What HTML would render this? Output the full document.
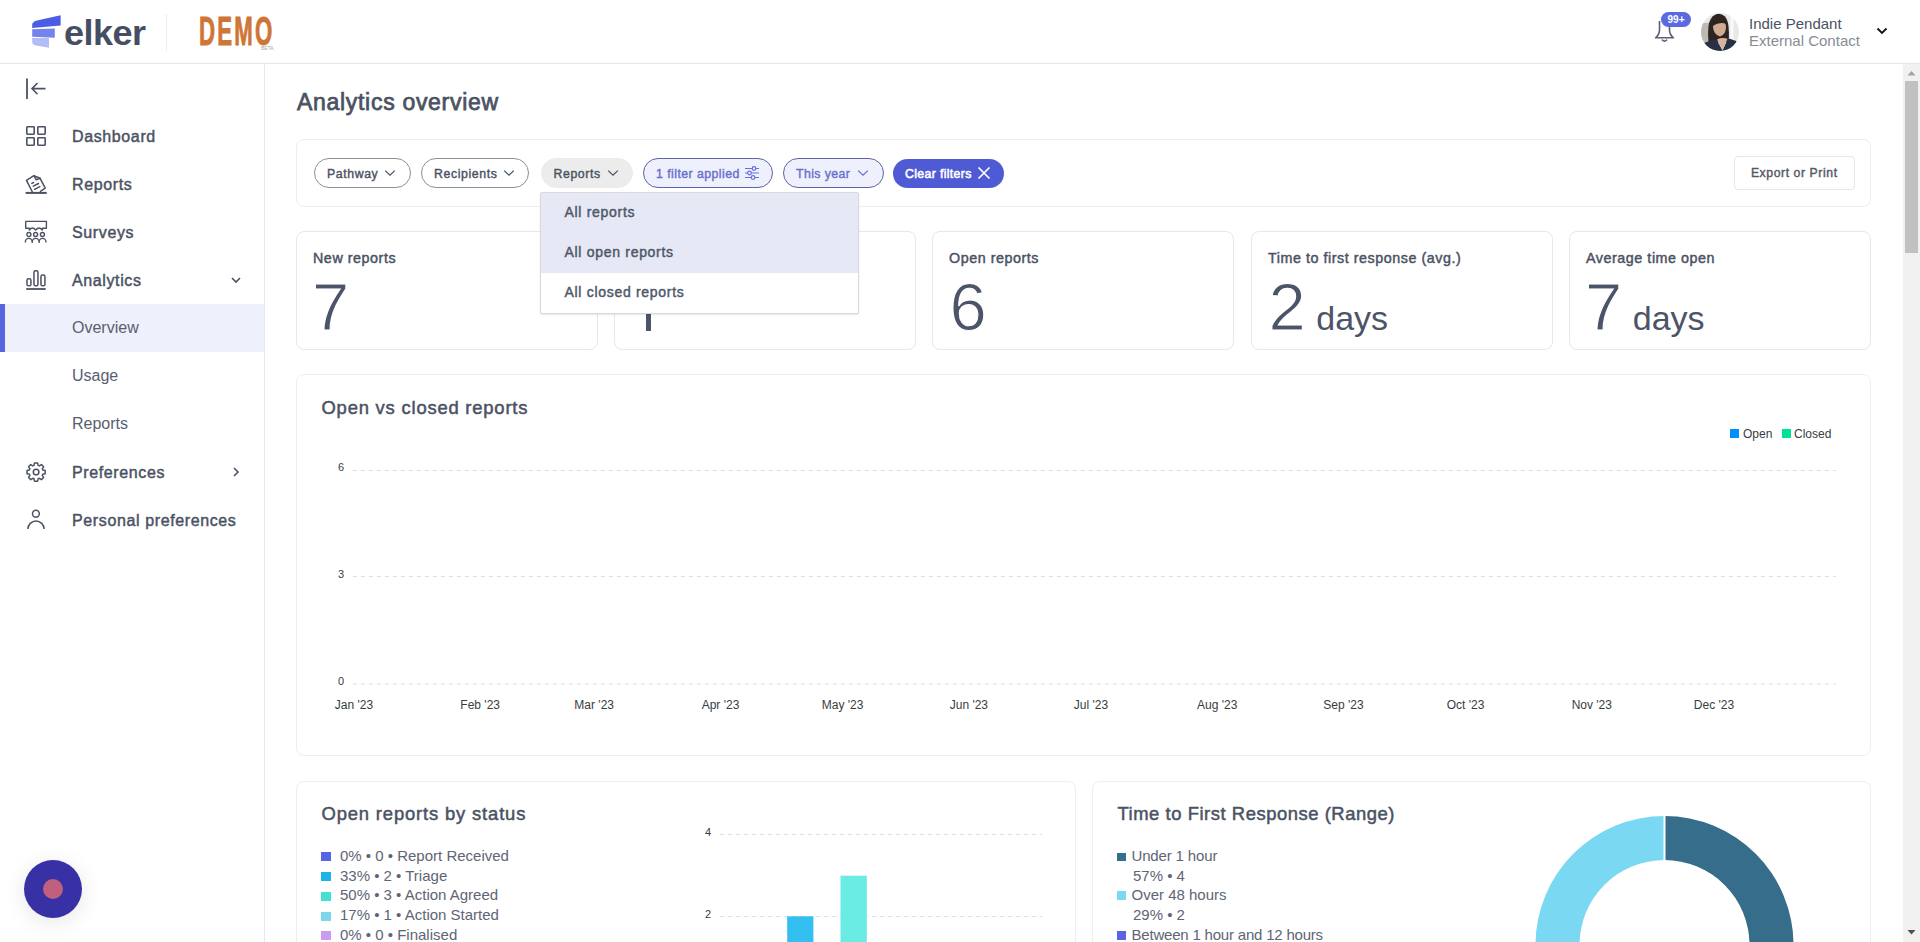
<!DOCTYPE html>
<html><head><meta charset="utf-8">
<style>
*{box-sizing:border-box;margin:0;padding:0}
html,body{width:1920px;height:942px;overflow:hidden;background:#fff;font-family:"Liberation Sans",sans-serif;color:#4a5263}
.a{position:absolute;white-space:nowrap}
#hdr{position:absolute;left:0;top:0;width:1920px;height:64px;border-bottom:1px solid #e6e7ea;background:#fff}
#side{position:absolute;left:0;top:64px;width:265px;height:878px;border-right:1px solid #e8e9ec;background:#fff}
.nav{position:absolute;left:72px;font-size:16px;font-weight:400;-webkit-text-stroke:0.45px #4a5263;letter-spacing:0.62px;line-height:50px;height:48px;color:#4a5263}
.sub{position:absolute;left:72px;font-size:16px;font-weight:400;line-height:48px;height:48px;color:#586070}
.ico{position:absolute;left:26px;width:20px;height:20px}
.card{position:absolute;background:#fff;border:1px solid #e7e8eb;border-radius:8px}
.pill{position:absolute;top:158px;height:30px;border-radius:15px;border:1px solid #8d9098;font-size:12.3px;font-weight:400;-webkit-text-stroke:0.4px currentColor;letter-spacing:0.6px;line-height:30px;color:#4a5263;padding-left:12px}
.pill svg{position:absolute;top:10px}
.stitle{position:absolute;font-size:14.3px;font-weight:400;-webkit-text-stroke:0.45px #4a5263;letter-spacing:0.55px;color:#4a5263;line-height:20px}
.big{position:absolute;font-size:67px;font-weight:400;color:#4b5468;line-height:70px;-webkit-text-stroke:1.1px #fff}
.days{font-size:34px;-webkit-text-stroke:0;color:#4b5468;margin-left:10.5px}
.ctitle{position:absolute;font-size:18.4px;font-weight:400;-webkit-text-stroke:0.5px #4a5263;letter-spacing:0.7px;color:#4a5263;line-height:24px}
.ax{position:absolute;font-size:12px;color:#373d3f;line-height:14px}
.leg{position:absolute;font-size:15px;color:#5e6573;line-height:18px}
.sq{position:absolute;width:10px;height:9px}
</style></head><body>

<!-- HEADER -->
<div id="hdr">
  <svg class="a" style="left:0;top:0" width="300" height="64">
    <path d="M32.2 24 Q33 21.5 37 20.5 L60.6 15.2 L60.6 25.5 L32.2 28.1 Z" fill="#4b5ce6"/>
    <path d="M32.2 29.2 L54.8 28.4 L54.8 37.8 L32.2 36.8 Z" fill="#7584ea"/>
    <path d="M32.2 37.9 L49 38 L49 47.8 L36 45.4 Q32.2 44.6 32.2 42 Z" fill="#b4bcf5"/>
    <line x1="166.5" y1="14" x2="166.5" y2="51" stroke="#ececee" stroke-width="1"/>
  </svg>
  <div class="a" style="left:64px;top:11px;font-size:36px;font-weight:700;color:#464e63;letter-spacing:-0.5px;line-height:44px;transform-origin:0 34px;transform:scaleY(0.95)">elker</div>
  <div class="a" style="left:198.5px;top:12px;font-size:40.5px;font-weight:700;color:#cf7535;line-height:40px;letter-spacing:4px;-webkit-text-stroke:0.9px #cf7535;transform-origin:0 0;transform:scale(0.55,0.985)">DEMO</div>
  <div class="a" style="left:261px;top:45px;font-size:5px;color:#aaa;line-height:6px">BETA</div>

  <!-- bell -->
  <svg class="a" style="left:1650px;top:15px" width="30" height="30" viewBox="0 0 30 30">
    <path d="M9.5 6 L9.5 15 Q9.5 19.5 5.6 22.8 L23.4 22.8 Q19.5 19.5 19.5 15 L19.5 6" fill="none" stroke="#5a6070" stroke-width="1.6" stroke-linejoin="round"/>
    <path d="M12.3 25 Q14.5 27.3 16.7 25" fill="none" stroke="#5a6070" stroke-width="1.6" stroke-linecap="round"/>
  </svg>
<div class="a" style="left:1661px;top:12px;width:30px;height:15px;border-radius:8px;background:#5b6ae0;color:#fff;font-size:10px;font-weight:700;line-height:15px;text-align:center">99+</div>
  <!-- avatar -->
  <svg class="a" style="left:1701px;top:13px" width="38" height="38" viewBox="0 0 38 38">
    <defs><clipPath id="av"><circle cx="19" cy="19" r="19"/></clipPath></defs>
    <g clip-path="url(#av)">
      <rect width="38" height="38" fill="#e9e8e6"/>
      <rect x="0" y="10" width="9" height="22" fill="#bdbab5"/>
      <rect x="29.5" y="3" width="3" height="30" fill="#fafafa"/>
      <path d="M7.5 29 Q6.5 18 8 10 Q11 1 17.5 0.8 Q25 1 27 10 Q28.5 18 27.6 29 Z" fill="#2e2420"/>
      <path d="M12 14 Q12 8 18.5 7.5 Q25 8 25 14 Q25 21.5 19 23.5 Q12.5 21.5 12 14 Z" fill="#d2ab93"/>
      <path d="M11.5 13 Q11.5 4.5 18.5 4 Q25 4.5 25.3 11 Q19 8.5 11.5 13 Z" fill="#2e2420"/>
      <path d="M0 38 L2 31 Q6 28 15.5 26.5 L21.5 37.5 L27 25.5 Q34 27 37 29 L38 38 Z" fill="#273044"/>
      <path d="M16 26.5 L21.6 37.3 L26.5 25.8 Q21 24 16 26.5 Z" fill="#d6b4a0"/>
    </g>
  </svg>
<div class="a" style="left:1749px;top:14px;font-size:15px;color:#4a5263;line-height:20px">Indie Pendant</div>
  <div class="a" style="left:1749px;top:31px;font-size:15px;color:#878c96;line-height:20px">External Contact</div>
  <svg class="a" style="left:1874px;top:24px" width="16" height="14" viewBox="0 0 16 14">
    <path d="M3.5 4.5 L8 9 L12.5 4.5" fill="none" stroke="#111" stroke-width="1.8"/>
  </svg>
</div>

<!-- SIDEBAR -->
<div id="side"></div>

<!-- collapse icon -->
<svg class="a" style="left:20px;top:74px" width="32" height="30" viewBox="0 0 32 30">
  <line x1="7" y1="4.5" x2="7" y2="25" stroke="#4a5263" stroke-width="1.8"/>
  <path d="M25.5 14.6 L12 14.6 M17.5 9 L12 14.6 L17.5 20.2" fill="none" stroke="#4a5263" stroke-width="1.6"/>
</svg>
<!-- dashboard -->
<svg class="ico" style="top:126px" viewBox="0 0 20 20"><g fill="none" stroke="#4a5263" stroke-width="1.6">
  <rect x="0.8" y="0.8" width="7.4" height="7.4" rx="0.6"/><rect x="11.8" y="0.8" width="7.4" height="7.4" rx="0.6"/>
  <rect x="0.8" y="11.8" width="7.4" height="7.4" rx="0.6"/><rect x="11.8" y="11.8" width="7.4" height="7.4" rx="0.6"/></g></svg>
<div class="nav" style="top:112px">Dashboard</div>
<!-- reports -->
<svg class="ico" style="top:174px;overflow:visible" viewBox="0 0 20 20"><g fill="none" stroke="#4a5263" stroke-width="1.5" stroke-linejoin="round" stroke-linecap="round">
  <path d="M6.4 18 L0.5 6.4 L7.9 1.7 L14.1 4.3 L19.2 14.1 L14.4 17.4"/>
  <path d="M7.9 1.7 L10.3 5.8 L14.1 4.3"/>
  <path d="M5.8 9.4 L7.6 8.5 M7.3 12.2 L12.5 9.5 M8.5 15.3 L13.8 12.6"/></g>
  <path d="M-0.4 18.9 L20.7 18.9" stroke="#4a5263" stroke-width="2"/></svg>
<div class="nav" style="top:160px">Reports</div>
<!-- surveys -->
<svg class="ico" style="top:221px;height:22px;overflow:visible" viewBox="0 0 20 22"><g fill="none" stroke="#4a5263" stroke-width="1.4" stroke-linejoin="round">
  <path d="M3.3 9 L3.3 7.2 L-0.3 7.2 L-0.3 0.4 L20.4 0.4 L20.4 7.2 L16.4 7.2 L16.4 9 Q13 5 9.7 9 Q6.5 5 3.3 9 Z"/>
  <circle cx="2.9" cy="13.5" r="2"/><circle cx="9.6" cy="13.5" r="2"/><circle cx="16.4" cy="13.5" r="2"/>
  <path d="M-0.7 21.4 A3.45 4 0 0 1 6.2 21.4 A3.45 4 0 0 1 13.1 21.4 A3.45 4 0 0 1 20 21.4"/></g></svg>
<div class="nav" style="top:208px">Surveys</div>
<!-- analytics -->
<svg class="ico" style="top:270px" viewBox="0 0 20 20"><g fill="none" stroke="#4a5263" stroke-width="1.5">
  <rect x="0.95" y="8.85" width="4" height="7" rx="1.6"/><rect x="7.95" y="0.75" width="4" height="15.1" rx="1.6"/><rect x="14.95" y="5.05" width="4" height="10.8" rx="1.6"/>
  <path d="M0.2 19 L19.7 19" stroke-width="1.8"/></g></svg>
<div class="nav" style="top:256px">Analytics</div>
<svg class="a" style="left:229px;top:273px" width="14" height="14" viewBox="0 0 14 14"><path d="M3 5 L7 9 L11 5" fill="none" stroke="#4a5263" stroke-width="1.6"/></svg>
<!-- overview highlight -->
<div class="a" style="left:0;top:304px;width:264px;height:48px;background:#eef0fb"></div>
<div class="a" style="left:0;top:304px;width:5px;height:48px;background:#5865e0"></div>
<div class="sub" style="top:304px">Overview</div>
<div class="sub" style="top:352px">Usage</div>
<div class="sub" style="top:400px">Reports</div>
<!-- preferences -->
<svg class="ico" style="top:462px;overflow:visible" viewBox="0 0 20 20"><g fill="none" stroke="#4a5263" stroke-width="1.5" stroke-linejoin="round">
  <path d="M8.03 3.41 L8.54 1.03 L11.66 1.03 L12.17 3.41 L13.37 3.91 L15.41 2.59 L17.61 4.79 L16.29 6.83 L16.79 8.03 L19.17 8.54 L19.17 11.66 L16.79 12.17 L16.29 13.37 L17.61 15.41 L15.41 17.61 L13.37 16.29 L12.17 16.79 L11.66 19.17 L8.54 19.17 L8.03 16.79 L6.83 16.29 L4.79 17.61 L2.59 15.41 L3.91 13.37 L3.41 12.17 L1.03 11.66 L1.03 8.54 L3.41 8.03 L3.91 6.83 L2.59 4.79 L4.79 2.59 L6.83 3.91 Z"/>
  <circle cx="10.1" cy="10.1" r="2.8"/></g></svg>
<div class="nav" style="top:448px">Preferences</div>
<svg class="a" style="left:229px;top:465px" width="14" height="14" viewBox="0 0 14 14"><path d="M5 3 L9 7 L5 11" fill="none" stroke="#4a5263" stroke-width="1.6"/></svg>
<!-- personal -->
<svg class="ico" style="top:509px;height:22px;overflow:visible" viewBox="0 0 20 22"><g fill="none" stroke="#4a5263" stroke-width="1.5">
  <circle cx="9.9" cy="4.7" r="3.4"/><path d="M1.9 20.1 A8 8 0 0 1 18.1 20.1"/></g></svg>
<div class="nav" style="top:496px">Personal preferences</div>
<!-- chat bubble -->
<div class="a" style="left:24px;top:860px;width:58px;height:58px;border-radius:50%;background:#3831a6;box-shadow:0 4px 22px rgba(0,0,0,0.10)"></div>
<div class="a" style="left:43px;top:879px;width:20px;height:20px;border-radius:50%;background:#c0607e"></div>


<!-- MAIN -->
<div class="a" style="left:297px;top:87px;font-size:23px;font-weight:400;-webkit-text-stroke:0.75px #4a5263;letter-spacing:0.7px;color:#4a5263;line-height:30px">Analytics overview</div>
<div class="card" style="left:296px;top:139px;width:1575px;height:68px;border-color:#eceef0"></div>
<div class="pill" style="left:314px;width:97px">Pathway</div><svg class="a" style="left:384px;top:168px" width="12" height="10" viewBox="0 0 12 10"><path d="M1.2 2.6 L6 7.2 L10.8 2.6" fill="none" stroke="#4a5263" stroke-width="1.3"/></svg>
<div class="pill" style="left:421px;width:108px">Recipients</div><svg class="a" style="left:502.5px;top:168px" width="12" height="10" viewBox="0 0 12 10"><path d="M1.2 2.6 L6 7.2 L10.8 2.6" fill="none" stroke="#4a5263" stroke-width="1.3"/></svg>
<div class="pill" style="left:540.5px;width:92.5px;border-color:#ececec;background:#ececec">Reports</div><svg class="a" style="left:606.5px;top:168px" width="12" height="10" viewBox="0 0 12 10"><path d="M1.2 2.6 L6 7.2 L10.8 2.6" fill="none" stroke="#4a5263" stroke-width="1.3"/></svg>
<div class="pill" style="left:643px;width:129.5px;border-color:#5d63a6;background:#eef0fc;color:#6870cc;letter-spacing:0.45px">1 filter applied</div>
<svg class="a" style="left:744px;top:165px" width="16" height="16" viewBox="0 0 16 16"><g fill="none" stroke="#6670d8" stroke-width="1.2">
  <path d="M1 3.5 L15 3.5 M1 8 L15 8 M1 12.5 L15 12.5"/>
  <circle cx="10" cy="3.5" r="1.8" fill="#eef0fc"/><circle cx="5.5" cy="8" r="1.8" fill="#eef0fc"/><circle cx="9" cy="12.5" r="1.8" fill="#eef0fc"/></g></svg>
<div class="pill" style="left:783px;width:101px;border-color:#5d63a6;background:#eef0fc;color:#6870cc;letter-spacing:0.4px">This year</div><svg class="a" style="left:857px;top:168px" width="12" height="10" viewBox="0 0 12 10"><path d="M1.2 2.6 L6 7.2 L10.8 2.6" fill="none" stroke="#6670d8" stroke-width="1.3"/></svg>
<div class="pill" style="left:893px;width:111px;top:159px;height:29px;border:none;background:#4f5bd5;color:#fff;line-height:30px;letter-spacing:0.35px;-webkit-text-stroke:0.55px #fff">Clear filters</div>
<svg class="a" style="left:977px;top:166px" width="14" height="14" viewBox="0 0 14 14"><path d="M1.5 1.5 L12.5 12.5 M12.5 1.5 L1.5 12.5" stroke="#fff" stroke-width="1.7"/></svg>
<div class="a" style="left:1734px;top:156px;width:120.5px;height:34px;border:1px solid #e6e7ea;border-radius:4px;font-size:12.2px;font-weight:400;-webkit-text-stroke:0.4px #525966;letter-spacing:0.59px;line-height:33px;text-align:center;color:#525966">Export or Print</div>

<!-- stat cards -->
<div class="card" style="left:296px;top:231px;width:302px;height:119px"></div>
<div class="card" style="left:614px;top:231px;width:302px;height:119px"></div>
<div class="card" style="left:932px;top:231px;width:302px;height:119px"></div>
<div class="card" style="left:1251px;top:231px;width:302px;height:119px"></div>
<div class="card" style="left:1569px;top:231px;width:302px;height:119px"></div>
<div class="stitle" style="left:313px;top:248px">New reports</div>
<div class="stitle" style="left:631px;top:248px">Closed reports</div>
<div class="stitle" style="left:949px;top:248px">Open reports</div>
<div class="stitle" style="left:1268px;top:248px">Time to first response (avg.)</div>
<div class="stitle" style="left:1586px;top:248px">Average time open</div>
<div class="big" style="left:312px;top:272px">7</div>
<div class="a" style="left:646.4px;top:285px;width:5px;height:46px;background:#4b5468"></div>
<div class="big" style="left:949.5px;top:272px">6</div>
<div class="big" style="left:1268.5px;top:272px">2<span class="days">days</span></div>
<div class="big" style="left:1585px;top:272px">7<span class="days">days</span></div>

<!-- dropdown -->
<div class="a" style="left:539.5px;top:192px;width:319.5px;height:122px;background:#fff;border:1px solid #d9d9dc;border-radius:2px;box-shadow:0 1px 2px rgba(0,0,0,0.10);overflow:hidden">
  <div style="height:80px;background:#e6e9f5"></div>
</div>
<div class="a" style="left:564.5px;top:202px;font-size:14px;font-weight:400;-webkit-text-stroke:0.45px #4f5869;letter-spacing:0.7px;line-height:20px;color:#4f5869">All reports</div>
<div class="a" style="left:564.5px;top:242px;font-size:14px;font-weight:400;-webkit-text-stroke:0.45px #4f5869;letter-spacing:0.7px;line-height:20px;color:#4f5869">All open reports</div>
<div class="a" style="left:564.5px;top:282px;font-size:14px;font-weight:400;-webkit-text-stroke:0.45px #4f5869;letter-spacing:0.7px;line-height:20px;color:#4f5869">All closed reports</div>

<!-- open vs closed -->
<div class="card" style="left:296px;top:374px;width:1575px;height:382px;border-color:#eeeff1"></div>
<div class="ctitle" style="left:321.5px;top:395.5px;letter-spacing:0.8px">Open vs closed reports</div>
<div class="a" style="left:1730px;top:428.5px;width:9px;height:9.5px;background:#008ffb"></div>
<div class="ax" style="left:1743px;top:427px;color:#373d3f">Open</div>
<div class="a" style="left:1782px;top:428.5px;width:9px;height:9.5px;background:#00e396"></div>
<div class="ax" style="left:1794px;top:427px;color:#373d3f">Closed</div>
<svg class="a" style="left:0;top:0" width="1920" height="942">
  <g stroke="#e0e0e0" stroke-width="1" stroke-dasharray="4 4">
    <line x1="353" y1="470.5" x2="1836" y2="470.5"/>
    <line x1="353" y1="576.5" x2="1836" y2="576.5"/>
    <line x1="353" y1="684" x2="1836" y2="684"/>
  </g>
  <g font-family="Liberation Sans" font-size="11" fill="#373d3f" text-anchor="end">
    <text x="344" y="471">6</text><text x="344" y="578">3</text><text x="344" y="685">0</text>
  </g>
</svg>
<div class="ax" style="left:314.0px;top:698px;width:80px;text-align:center">Jan &#39;23</div>
<div class="ax" style="left:440.2px;top:698px;width:80px;text-align:center">Feb &#39;23</div>
<div class="ax" style="left:554.2px;top:698px;width:80px;text-align:center">Mar &#39;23</div>
<div class="ax" style="left:680.5px;top:698px;width:80px;text-align:center">Apr &#39;23</div>
<div class="ax" style="left:802.6px;top:698px;width:80px;text-align:center">May &#39;23</div>
<div class="ax" style="left:928.9px;top:698px;width:80px;text-align:center">Jun &#39;23</div>
<div class="ax" style="left:1051.0px;top:698px;width:80px;text-align:center">Jul &#39;23</div>
<div class="ax" style="left:1177.2px;top:698px;width:80px;text-align:center">Aug &#39;23</div>
<div class="ax" style="left:1303.5px;top:698px;width:80px;text-align:center">Sep &#39;23</div>
<div class="ax" style="left:1425.6px;top:698px;width:80px;text-align:center">Oct &#39;23</div>
<div class="ax" style="left:1551.8px;top:698px;width:80px;text-align:center">Nov &#39;23</div>
<div class="ax" style="left:1674.0px;top:698px;width:80px;text-align:center">Dec &#39;23</div>

<!-- open reports by status -->
<div class="card" style="left:296px;top:780.5px;width:780px;height:200px;border-color:#eeeff1"></div>
<div class="ctitle" style="left:321.5px;top:801.5px;letter-spacing:0.85px">Open reports by status</div>
<div class="sq" style="left:321px;top:852.30px;background:#5566e6"></div>
<div class="sq" style="left:321px;top:872.05px;background:#1bb5ea"></div>
<div class="sq" style="left:321px;top:891.80px;background:#45e0d4"></div>
<div class="sq" style="left:321px;top:911.55px;background:#7ed6ec"></div>
<div class="sq" style="left:321px;top:931.30px;background:#c99cf0"></div>
<div class="leg" style="left:340px;top:846.80px">0% • 0 • Report Received</div>
<div class="leg" style="left:340px;top:866.55px">33% • 2 • Triage</div>
<div class="leg" style="left:340px;top:886.30px">50% • 3 • Action Agreed</div>
<div class="leg" style="left:340px;top:906.05px">17% • 1 • Action Started</div>
<div class="leg" style="left:340px;top:925.80px">0% • 0 • Finalised</div>
<svg class="a" style="left:0;top:0" width="1920" height="942">
  <g stroke="#e0e0e0" stroke-width="1" stroke-dasharray="4 4">
    <line x1="720" y1="834.5" x2="1042" y2="834.5"/>
    <line x1="720" y1="916.5" x2="1042" y2="916.5"/>
  </g>
  <g font-family="Liberation Sans" font-size="11" fill="#373d3f" text-anchor="end">
    <text x="711" y="836">4</text><text x="711" y="918">2</text>
  </g>
  <rect x="787.2" y="916.3" width="26.2" height="40" fill="#33bff0"/>
  <rect x="840.5" y="875.7" width="26.3" height="80" fill="#6aebe3"/>
</svg>

<!-- time to first response -->
<div class="card" style="left:1092px;top:780.5px;width:779px;height:200px;border-color:#eeeff1"></div>
<div class="ctitle" style="left:1117.5px;top:802px;letter-spacing:0.55px">Time to First Response (Range)</div>
<div class="sq" style="left:1117px;top:852.5px;width:9px;height:8.5px;background:#356d8a"></div>
<div class="sq" style="left:1117px;top:891.3px;width:9px;height:8.5px;background:#7ad8f3"></div>
<div class="sq" style="left:1117px;top:931.3px;width:9px;height:8.5px;background:#5b63e6"></div>
<div class="leg" style="left:1131.5px;top:846.80px;letter-spacing:-0.15px">Under 1 hour</div>
<div class="leg" style="left:1133px;top:866.55px">57% • 4</div>
<div class="leg" style="left:1131.5px;top:886.30px">Over 48 hours</div>
<div class="leg" style="left:1133px;top:906.05px">29% • 2</div>
<div class="leg" style="left:1131.5px;top:925.80px;letter-spacing:-0.2px">Between 1 hour and 12 hours</div>
<svg class="a" style="left:0;top:0" width="1920" height="942">
  <path d="M1664.5 816 A129 129 0 0 1 1793.5 945 L1749.5 945 A85 85 0 0 0 1664.5 860 Z" fill="#356d8a"/>
  <path d="M1664.5 816 A129 129 0 0 0 1535.5 945 L1579.5 945 A85 85 0 0 1 1664.5 860 Z" fill="#7ad8f3"/>
  <line x1="1664.5" y1="814" x2="1664.5" y2="862" stroke="#fff" stroke-width="2"/>
</svg>

<!-- scrollbar -->
<div class="a" style="left:1903px;top:64px;width:17px;height:878px;background:#f1f1f1"></div>
<div class="a" style="left:1905px;top:81px;width:13px;height:172px;background:#c1c1c1"></div>
<svg class="a" style="left:1903px;top:64px" width="17" height="878">
  <path d="M4.5 11.5 L8.5 7 L12.5 11.5 Z" fill="#a3a3a3"/>
  <path d="M4.5 866 L8.5 870.5 L12.5 866 Z" fill="#505050"/>
</svg>

</body></html>
